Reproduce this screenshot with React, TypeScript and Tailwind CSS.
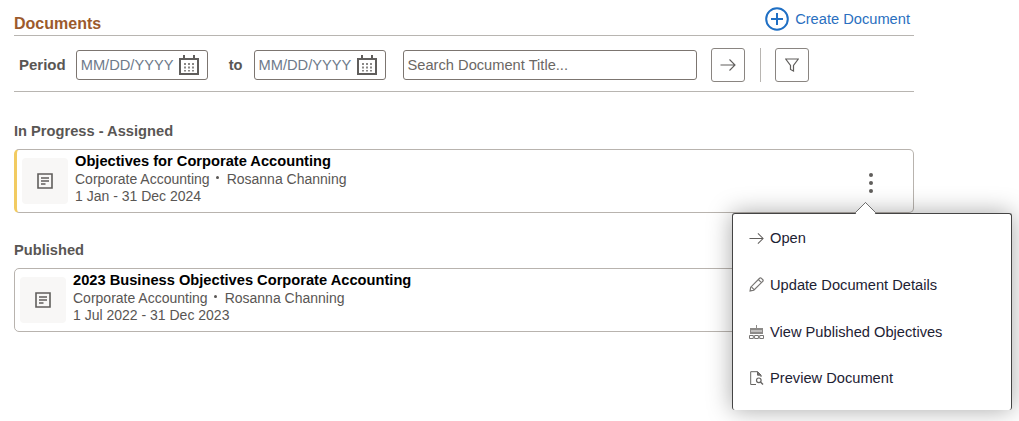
function CalendarIcon() {
  return (
    <svg width="20" height="20" viewBox="0 0 20 20" className="shrink-0" aria-hidden="true">
      <path d="M1 4h18v15H1z" fill="none" stroke="#605e5c" strokeWidth="2" />
      <path d="M5 0v5M15 0v5" stroke="#605e5c" strokeWidth="2" />
      <path
        d="M5 8h2v2H5zM9 8h2v2H9zM13 8h2v2h-2zM5 11.5h2v2H5zM9 11.5h2v2H9zM13 11.5h2v2h-2zM5 15h2v1.5H5zM9 15h2v1.5H9zM13 15h2v1.5h-2z"
        fill="#8a8886"
      />
    </svg>
  );
}

function DocIcon() {
  return (
    <svg width="16" height="16" viewBox="0 0 16 16" aria-hidden="true">
      <path d="M1 1h14v14H1z" fill="none" stroke="#605e5c" strokeWidth="1.6" />
      <path d="M4 5h8M4 8h8M4 11h4.5" stroke="#605e5c" strokeWidth="1.4" />
    </svg>
  );
}

function LongArrow({ size }: { size: number }) {
  return (
    <svg width={size} height={size} viewBox="0 0 16 16" fill="none" stroke="#605e5c" strokeWidth="1.1" aria-hidden="true">
      <path d="M.5 8h14.5M9.5 2.5L15 8l-5.5 5.5" />
    </svg>
  );
}

function DateInput() {
  return (
    <div className="flex h-[30px] w-[132px] items-center justify-between rounded-[3px] border border-[#7c7570] pl-1 pr-2">
      <span className="text-[14.67px] text-[#6e7a8a]">MM/DD/YYYY</span>
      <CalendarIcon />
    </div>
  );
}

interface DocumentCardProps {
  title: string;
  date: string;
  accent?: boolean;
}

function DocumentCard({ title, date, accent }: DocumentCardProps) {
  return (
    <div
      className={
        accent
          ? 'flex h-16 items-center gap-[7px] rounded-[5px] border border-l-[3px] border-[#b8b3ae] border-l-[#f2cb61] pl-[5px]'
          : 'flex h-16 items-center gap-[7px] rounded-[5px] border border-[#b8b3ae] pl-[5px]'
      }
    >
      <div className="flex h-[46px] w-[46px] items-center justify-center rounded-[4px] bg-[#f8f7f6]">
        <DocIcon />
      </div>
      <div className="mb-[5.25px] text-[14px] leading-[17px] text-[#595654]">
        <div className="mb-[1.25px] text-[14.67px] leading-[18px] font-bold text-black">{title}</div>
        <div className="flex items-center">
          Corporate Accounting
          <span className="mr-[8px] mb-[5px] ml-[6px] h-[3px] w-[3px] rounded-full bg-[#595654]" />
          Rosanna Channing
        </div>
        <div>{date}</div>
      </div>
    </div>
  );
}

function MenuItem({ icon, label }: { icon: React.ReactNode; label: string }) {
  return (
    <div className="flex h-[46.67px] items-center gap-[6px] pl-4 text-[14.67px] text-[#1d2233]">
      <span className="flex w-[15px] justify-center">{icon}</span>
      {label}
    </div>
  );
}

export default function App() {
  return (
    <div className="relative h-[421px] w-[1019px] overflow-hidden bg-white font-['Liberation_Sans',Arial,sans-serif]">
      <div className="ml-[14px] w-[900px]">
        <div className="flex h-9 items-end justify-between border-b border-[#b8b5b1] pb-[3px]">
          <h1 className="text-[16px] leading-4 font-bold text-[#9c5a2c]">Documents</h1>
          <div className="mr-[4px] mb-[1px] flex items-center gap-[6px] text-[14.67px] text-[#2a6fc0]">
            <svg width="24" height="24" viewBox="0 0 24 24" aria-hidden="true">
              <circle cx="12" cy="12" r="10.8" fill="none" stroke="#1f6fc4" strokeWidth="2" />
              <path d="M12 6v12M6 12h12" stroke="#1f6fc4" strokeWidth="2" />
            </svg>
            Create Document
          </div>
        </div>

        <div className="flex h-14 items-center border-b border-[#b8b5b1] pt-[3px] pl-[5px]">
          <span className="text-[15px] font-bold text-[#595654]">Period</span>
          <div className="ml-[10px]">
            <DateInput />
          </div>
          <span className="mr-[11px] ml-[21px] text-[14.67px] font-bold text-[#595654]">to</span>
          <DateInput />
          <div className="ml-[17px] flex h-[30px] w-[294px] items-center rounded-[3px] border border-[#7c7570] pl-1 text-[14.67px] text-[#6b6764]">
            Search Document Title...
          </div>
          <button className="ml-[14px] flex h-[34px] w-[34px] items-center justify-center rounded-[3px] border border-[#8a8581]">
            <LongArrow size={16} />
          </button>
          <div className="mr-[14px] ml-[15px] h-[34px] w-px bg-[#b8b5b1]" />
          <button className="flex h-[34px] w-[34px] items-center justify-center rounded-[3px] border border-[#8a8581]">
            <svg width="14" height="14" viewBox="0 0 14 14" fill="none" stroke="#605e5c" aria-hidden="true">
              <path d="M.7 1h12.600L8.500 7.500V13L5.500 11.500V7.500z" strokeWidth="1.2" />
            </svg>
          </button>
        </div>

        <h2 className="mt-[31px] mb-[10px] text-[14.67px] leading-4 font-bold text-[#595654]">
          In Progress - Assigned
        </h2>
        <DocumentCard accent title="Objectives for Corporate Accounting" date="1 Jan - 31 Dec 2024" />

        <h2 className="mt-[29px] mb-[10px] text-[14.67px] leading-4 font-bold text-[#595654]">Published</h2>
        <DocumentCard title="2023 Business Objectives Corporate Accounting" date="1 Jul 2022 - 31 Dec 2023" />
      </div>

      {/* kebab and popup lie over the cards */}
      <div className="absolute top-[173px] left-[869px] flex flex-col gap-[4px]">
        <span className="h-1 w-1 rounded-full bg-[#605e5c]" />
        <span className="h-1 w-1 rounded-full bg-[#605e5c]" />
        <span className="h-1 w-1 rounded-full bg-[#605e5c]" />
      </div>
      <div className="absolute top-[213px] left-[732px] w-[280px] rounded-[3px] border-x border-t border-[#444] bg-white shadow-[0_0_24px_rgba(0,0,0,0.35)]">
        <div className="absolute -top-[9px] left-[125px] h-[15px] w-[15px] rotate-45 rounded-[1px] border-t border-l border-[#444] bg-white" />
        <div className="relative h-[196px] pt-px">
          <MenuItem icon={<LongArrow size={15} />} label="Open" />
          <MenuItem
            icon={
              <svg width="15" height="15" viewBox="0 0 14 14" fill="none" stroke="#777573" strokeWidth="1.1" aria-hidden="true">
                <path d="M1 13l.6-3.500L9.900 1.200c.5-.5 1.100-.5 1.500-.1l1.500 1.500c.4.400.4 1-.1 1.500L4.500 12.400zM2.500 9.500l2 2M8.800 2.400l2.800 2.800" />
              </svg>
            }
            label="Update Document Details"
          />
          <MenuItem
            icon={
              <svg width="15" height="14" viewBox="0 0 15 14" aria-hidden="true">
                <path d="M7 0h1v3H7zM1 3h13v6H1z" fill="#8c8a88" />
                <path d="M2 5.500h11v1H2z" fill="#f4f3f2" />
                <path d="M.5 10.500h3.800v3H.5zM5.600 10.500h3.800v3H5.600zM10.700 10.500h3.800v3h-3.800z" fill="none" stroke="#777573" />
              </svg>
            }
            label="View Published Objectives"
          />
          <MenuItem
            icon={
              <svg width="14" height="14" viewBox="0 0 14 14" fill="none" stroke="#666462" aria-hidden="true">
                <path d="M6 13.500H.7V.7H7.500l3.500 3.500V6" />
                <path d="M7.500 .7L11 4.200H7.500z" fill="#777573" />
                <circle cx="8.800" cy="9.300" r="2.300" strokeWidth="1.2" />
                <path d="M10.500 11l2.500 2.500" strokeWidth="1.4" />
              </svg>
            }
            label="Preview Document"
          />
        </div>
      </div>
    </div>
  );
}
